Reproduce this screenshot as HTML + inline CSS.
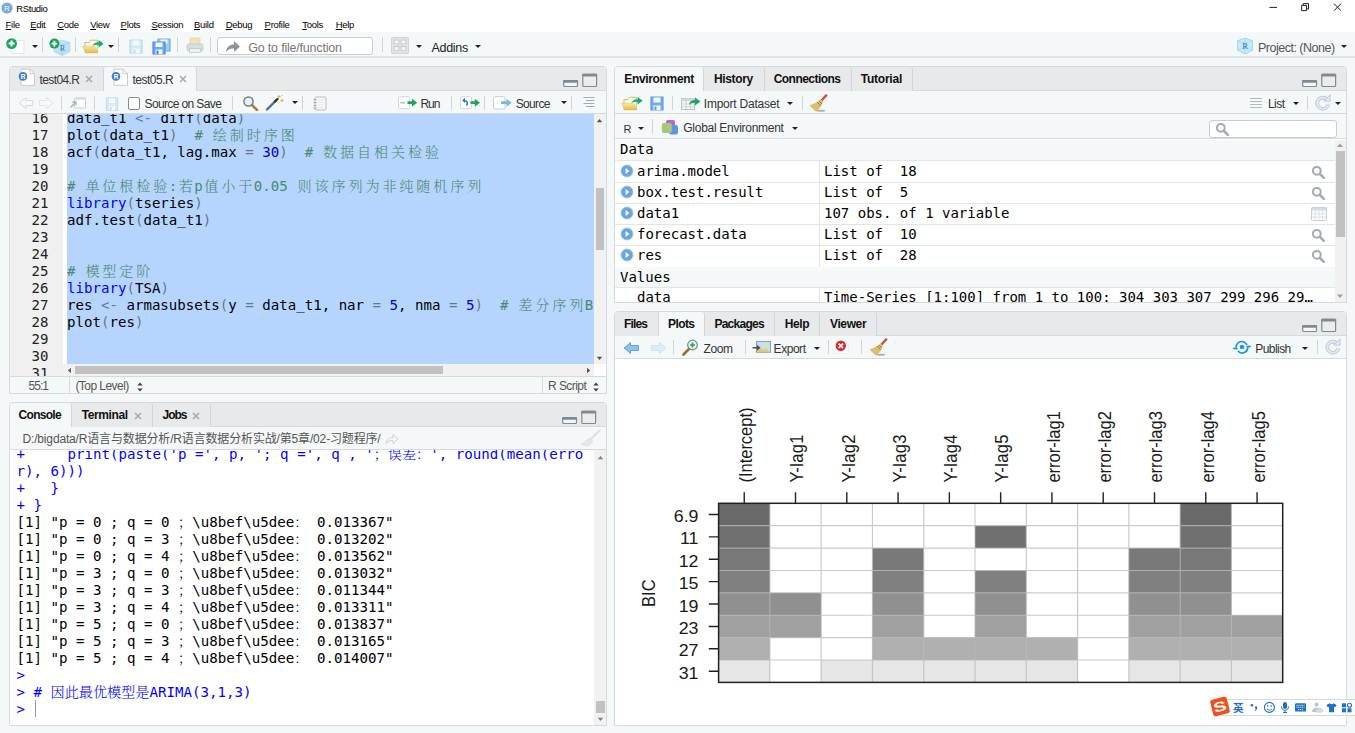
<!DOCTYPE html>
<html lang="zh">
<head>
<meta charset="utf-8">
<title>RStudio</title>
<style>
*{box-sizing:border-box;margin:0;padding:0}
html,body{width:1355px;height:733px;overflow:hidden}
body{position:relative;background:#f4f8f9;font-family:"Liberation Sans","Noto Sans CJK SC",sans-serif;font-size:12px;color:#222}
.abs{position:absolute}
.ui{font-family:"Liberation Sans","Noto Sans CJK SC",sans-serif;white-space:nowrap}
.mono{font-family:"Liberation Mono","Noto Serif CJK SC",monospace;white-space:pre}
#titlebar{left:0;top:0;width:1355px;height:16px;background:#fff}
#menubar{left:0;top:16px;width:1355px;height:16px;background:#fff}
#menubar span{position:absolute;top:0;font-size:9.5px;line-height:17px;letter-spacing:-0.3px;color:#000}
#menubar u{text-decoration:underline;text-underline-offset:1px}
#toolbar{left:0;top:32px;width:1355px;height:26px;background:#f4f8f9;border-bottom:2px solid #e1e4e7}
.pane{position:absolute;border:1px solid #d6dadc;border-radius:4px 4px 0 0;background:#fff;overflow:hidden}
.tabhead{position:absolute;left:0;top:0;right:0;height:24px;background:#e7e9eb;border-bottom:1px solid #d6dadc}
.tab{position:absolute;top:0;height:24px;border-right:1px solid #d2d6d8;font-size:12px;line-height:24px;color:#1a1a1a;background:#e7e9eb;border-radius:3px 3px 0 0}
.tab.sel{background:#f4f8f9;height:25px}
.tab b{font-weight:bold}
.tbar{position:absolute;left:0;right:0;background:#f4f8f9;border-bottom:1px solid #d6dadc}
.sep{position:absolute;width:1px;background:#d0d4d6}
.t12{position:absolute;font-size:12px;line-height:14px;color:#333;white-space:nowrap}
.arr{position:absolute;width:0;height:0;margin-left:.5px;border-left:3px solid transparent;border-right:3px solid transparent;border-top:3.4px solid #222}

.winbtn{position:absolute}
.code{position:absolute;left:0;font-family:"DejaVu Sans Mono","Liberation Mono","Noto Serif CJK SC",monospace;font-size:14.1px;line-height:17px;height:17px;white-space:pre;color:#000}
.code .c{color:#4c886b}.code .o{color:#687687}.code .n{color:#0000cd}.code .k{color:#0000ff}
.code .z{letter-spacing:2.876px;position:relative;left:1.4px}
.ln{position:absolute;left:0;width:38.500px;text-align:right;font-family:"DejaVu Sans Mono",monospace;font-size:14.05px;line-height:17px;height:17px;color:#222}

.cl{position:absolute;left:6.5px;font-family:"DejaVu Sans Mono","Liberation Mono","Noto Serif CJK SC",monospace;font-size:14.13px;line-height:17px;height:17px;white-space:pre;color:#000}
.cl.b{color:#0000ff}
.closex{position:absolute;font-size:13px;line-height:14px;color:#a3a7ab}

.er{position:absolute;left:615px;width:720px;height:21.2px;background:#fff;border-bottom:1px solid #e3e6e8}
.et{position:absolute;font-family:"DejaVu Sans Mono","Liberation Mono",monospace;font-size:14px;line-height:17px;white-space:pre;color:#000}
.u{position:relative;top:-1.5px}
.et{margin-top:-0.7px}.er{margin-top:.5px}
.zc{font-weight:300}.code .z{font-weight:300}
</style>
</head>
<body>
<!-- TITLE BAR -->
<div id="titlebar" class="abs">
<svg class="abs" style="left:1px;top:2px" width="12" height="12" viewBox="0 0 12 12"><circle cx="6" cy="6" r="5.6" fill="#75aadb"/><text x="6" y="8.8" font-family="Liberation Sans,sans-serif" font-size="7.5" fill="#fff" text-anchor="middle">R</text></svg>
<span class="abs ui" style="left:16.3px;top:1.5px;font-size:9.5px;line-height:14px;letter-spacing:-0.4px;color:#000">RStudio</span>
<svg class="abs" style="left:1262px;top:0" width="90" height="16" viewBox="0 0 90 16"><path d="M7.500 7.400h7.500" stroke="#222" stroke-width="1" fill="none"/><path d="M39.600 5.400h5v5.200h-5zM41.200 5.200v-1.600h5.300v5.300h-1.700" stroke="#222" stroke-width="1" fill="none"/><path d="M72 3.600l7 7.100M79 3.600l-7 7.100" stroke="#222" stroke-width="1" fill="none"/></svg>
</div>
<!-- MENU BAR -->
<div id="menubar" class="abs ui"><span style="left:5.6px"><u>F</u>ile</span><span style="left:30.2px"><u>E</u>dit</span><span style="left:57.2px"><u>C</u>ode</span><span style="left:90.2px"><u>V</u>iew</span><span style="left:120.6px"><u>P</u>lots</span><span style="left:151.5px"><u>S</u>ession</span><span style="left:194px"><u>B</u>uild</span><span style="left:225.7px"><u>D</u>ebug</span><span style="left:264.6px"><u>P</u>rofile</span><span style="left:302.3px"><u>T</u>ools</span><span style="left:335.7px"><u>H</u>elp</span></div>
<!-- MAIN TOOLBAR -->
<div id="toolbar" class="abs">
<!-- new file -->
<svg class="abs" style="left:5px;top:5px" width="22" height="18" viewBox="0 0 22 18"><rect x="7" y="3.5" width="12" height="13" fill="#fff" stroke="#e1e6ea" stroke-width="1"/><circle cx="6.6" cy="6.6" r="5.4" fill="#1aa45c"/><path d="M6.6 3.6v6M3.6 6.6h6" stroke="#fff" stroke-width="2"/></svg>
<div class="arr" style="left:31.5px;top:13px"></div>
<div class="sep" style="left:42px;top:5px;height:15px"></div>
<!-- new project -->
<svg class="abs" style="left:48px;top:5px" width="24" height="20" viewBox="0 0 24 20"><path d="M14 3l8 2.5v9l-8 4-8-4v-9z" fill="#bfe1f3" stroke="#9fd0ea" stroke-width=".6"/><path d="M6 5.5l8 3 8-3M14 8.500v10" stroke="#8cc6e6" stroke-width=".6" fill="none"/><text x="14.500" y="14" font-family="Liberation Serif,serif" font-size="8" fill="#2a76b8" text-anchor="middle">R</text><circle cx="6.400" cy="6.600" r="5" fill="#1aa45c"/><path d="M6.400 3.800v5.600M3.600 6.600h5.600" stroke="#fff" stroke-width="1.900"/></svg>
<div class="sep" style="left:75px;top:5px;height:15px"></div>
<!-- open -->
<svg class="abs" style="left:82px;top:6px" width="23" height="16" viewBox="0 0 23 16"><defs><linearGradient id="fg" x1="0" y1="0" x2="0" y2="1"><stop offset="0" stop-color="#f5ea9f"/><stop offset="1" stop-color="#dfbd48"/></linearGradient></defs><path d="M3 14.500v-10h4l1.500-2.300h6.800v12.300z" fill="#fbfbf6" stroke="#d4b85a" stroke-width=".9"/><path d="M.7 8.200h12.100l3 6.700h-11.800z" fill="url(#fg)" stroke="#d9bb55" stroke-width=".5"/><path d="M10.300 7.900c1.500-2.800 4-3.800 6.300-3.600v-2.300l5 3.700-5 3.700v-2.400c-2.300-.3-4.500-.1-6.300.9z" fill="#12ad7a"/></svg>
<div class="arr" style="left:107px;top:13px"></div>
<div class="sep" style="left:118px;top:5px;height:15px"></div>
<!-- save (disabled) -->
<svg class="abs" style="left:129px;top:7px" width="14" height="15" viewBox="0 0 14 15"><path d="M1 1h12v13h-12z" fill="#d9e8f6" stroke="#bcd5ee" stroke-width="1.200"/><rect x="3.500" y="1.500" width="7" height="5" fill="#f3f8fc"/><rect x="3.500" y="9.500" width="7" height="4.500" fill="#f3f8fc"/><rect x="4.500" y="10.500" width="2" height="3.500" fill="#c7dcf0"/></svg>
<!-- save all -->
<svg class="abs" style="left:152px;top:6px" width="19" height="17" viewBox="0 0 19 17"><path d="M6 1h12v12h-12z" fill="#9ccdee" stroke="#6db0e2" stroke-width="1.200"/><rect x="8.500" y="1.500" width="7" height="4" fill="#eef5fc"/><path d="M1 4h12v12h-12z" fill="#6ba6e8" stroke="#4a8fdc" stroke-width="1.200"/><rect x="3.500" y="4.500" width="7" height="4.500" fill="#f3f8fc"/><rect x="3.500" y="11.500" width="7" height="4.500" fill="#f3f8fc"/><rect x="4.500" y="12.500" width="2" height="3.500" fill="#3b82d1"/></svg>
<div class="sep" style="left:177px;top:5px;height:15px"></div>
<!-- print -->
<svg class="abs" style="left:186px;top:5px" width="18" height="17" viewBox="0 0 18 17"><rect x="4" y="1" width="10" height="7" fill="#f3e3b2" stroke="#e0cf9c" stroke-width=".6"/><rect x="1" y="7" width="16" height="7" rx="1.500" fill="#d9dde3" stroke="#bcc2cb" stroke-width=".7"/><rect x="3.500" y="11.500" width="11" height="4" fill="#eceff3" stroke="#b5bbc4" stroke-width=".6"/></svg>
<div class="sep" style="left:210px;top:5px;height:15px"></div>
<!-- goto -->
<div class="abs" style="left:217px;top:5px;width:156px;height:18px;background:#fff;border:1px solid #c9cdd0;border-radius:3px"></div>
<svg class="abs" style="left:225px;top:8px" width="16" height="13" viewBox="0 0 16 13"><path d="M1 12c.5-5 3.500-7.500 8-7.500v-3.500l6 5.500-6 5.500v-3.500c-3.500-.2-6 .8-8 3.500z" fill="#8e9399"/></svg>
<span class="abs ui" style="left:248.3px;top:7.5px;font-size:12.5px;line-height:16px;letter-spacing:-0.2px;color:#777">Go to file/function</span>
<div class="sep" style="left:382px;top:5px;height:15px"></div>
<!-- grid -->
<svg class="abs" style="left:391px;top:5px" width="18" height="17" viewBox="0 0 18 17"><rect x=".5" y=".5" width="17" height="16" rx="1.500" fill="#e3e6e9" stroke="#cfd3d7"/><rect x="3" y="3" width="5" height="4" fill="#f4f6f7" stroke="#bfc4c9" stroke-width=".8"/><rect x="10" y="3" width="5" height="4" fill="#f4f6f7" stroke="#bfc4c9" stroke-width=".8"/><rect x="3" y="9.500" width="5" height="4" fill="#f4f6f7" stroke="#bfc4c9" stroke-width=".8"/><rect x="10" y="9.500" width="5" height="4" fill="#f4f6f7" stroke="#bfc4c9" stroke-width=".8"/></svg>
<div class="arr" style="left:415px;top:13px"></div>
<span class="abs ui" style="left:431.5px;top:7.5px;font-size:12.5px;line-height:16px;letter-spacing:-0.3px;color:#222">Addins</span>
<div class="arr" style="left:474px;top:13px"></div>
<!-- project -->
<svg class="abs" style="left:1236px;top:5px" width="18" height="18" viewBox="0 0 18 18"><path d="M9 1l7.500 2.800v9.400l-7.500 3.800-7.500-3.800v-9.400z" fill="#c9ebf8" stroke="#86cfea" stroke-width=".7"/><path d="M1.500 3.800l7.500 2.800 7.500-2.800M9 6.600v10.400M1.500 13.200l7.500-3 7.500 3M9 1v9" stroke="#8fd3ec" stroke-width=".6" fill="none"/><text x="9" y="12" font-family="Liberation Serif,serif" font-size="8.500" fill="#2a76b8" text-anchor="middle">R</text></svg>
<span class="abs ui" style="left:1258px;top:7.5px;font-size:12.5px;line-height:16px;letter-spacing:-0.5px;color:#555">Project: (None)</span>
<div class="arr" style="left:1340px;top:13px"></div>
</div>
<!-- SOURCE PANE -->
<div id="src" class="pane" style="left:9px;top:66px;width:598px;height:328px">
<div class="tabhead"></div>
<div class="tab" style="left:0;width:94px"></div>
<div class="tab sel" style="left:94px;width:93px"></div>
</div>
<svg class="abs" style="left:17.5px;top:68px" width="18" height="18" viewBox="0 0 18 18"><path d="M3 1.200h9l4.500 4.500v11.600h-13.500z" fill="#fff" stroke="#c2c6ca" stroke-width=".9"/><path d="M12 1.200v4.500h4.500" fill="none" stroke="#c2c6ca" stroke-width=".9"/><circle cx="5" cy="8.400" r="4.300" fill="#3f7fc4"/><text x="5" y="10.800" font-family="Liberation Sans,sans-serif" font-weight="bold" font-size="6.500" fill="#fff" text-anchor="middle">R</text></svg>
<span class="t12" style="left:39.5px;top:72.5px;letter-spacing:-0.6px">test04.R</span>
<svg class="abs" style="left:85px;top:75px" width="8" height="8" viewBox="0 0 8 8"><path d="M1 1l6 6M7 1l-6 6" stroke="#a6aaae" stroke-width="1.500"/></svg>
<svg class="abs" style="left:111.0px;top:68px" width="18" height="18" viewBox="0 0 18 18"><path d="M3 1.200h9l4.500 4.500v11.600h-13.500z" fill="#fff" stroke="#c2c6ca" stroke-width=".9"/><path d="M12 1.200v4.500h4.500" fill="none" stroke="#c2c6ca" stroke-width=".9"/><circle cx="5" cy="8.400" r="4.300" fill="#3f7fc4"/><text x="5" y="10.800" font-family="Liberation Sans,sans-serif" font-weight="bold" font-size="6.500" fill="#fff" text-anchor="middle">R</text></svg>
<span class="t12" style="left:132.5px;top:72.5px;letter-spacing:-0.51px">test05.R</span>
<svg class="abs" style="left:179px;top:75px" width="8" height="8" viewBox="0 0 8 8"><path d="M1 1l6 6M7 1l-6 6" stroke="#a6aaae" stroke-width="1.500"/></svg>
<svg class="abs" style="left:562.5px;top:73.0px" width="36" height="15" viewBox="0 0 36 15"><rect x=".7" y="7.700" width="13.800" height="5.800" rx="1" fill="#f5f6f7" stroke="#7f8b92" stroke-width="1.200"/><rect x=".1" y="7.100" width="15" height="2.600" rx=".8" fill="#7f8b92"/><rect x="19.800" y="1.300" width="13.800" height="12.200" rx="1" fill="#eaeced" stroke="#7f8b92" stroke-width="1.200"/><rect x="19.200" y=".7" width="15" height="2.800" rx=".8" fill="#7f8b92"/></svg>
<!-- source toolbar -->
<div class="tbar" style="left:10px;top:91px;width:596px;right:auto;height:23px"></div>
<svg class="abs" style="left:18px;top:96px" width="38" height="14" viewBox="0 0 38 14"><path d="M1.500 7l6.500-5.500v3h7v5h-7v3z" fill="#f7f9fa" stroke="#d3d8db" stroke-width="1"/><path d="M35 7l-6.500-5.500v3h-7v5h7v3z" fill="#f7f9fa" stroke="#dfe3e5" stroke-width="1"/></svg>
<div class="sep" style="left:61px;top:96px;height:14px"></div>
<svg class="abs" style="left:69px;top:96px" width="18" height="14" viewBox="0 0 18 14"><rect x="5.500" y="1.500" width="11" height="10.500" rx="1" fill="#fff" stroke="#c9ced2"/><rect x="5.500" y="1.500" width="11" height="2.500" fill="#dbe3ec"/><path d="M1.500 11.500l5-5M3.500 6h3.500v3.500" stroke="#aab2b9" stroke-width="1.400" fill="none"/></svg>
<div class="sep" style="left:94px;top:96px;height:14px"></div>
<svg class="abs" style="left:104.500px;top:96.500px" width="14" height="14" viewBox="0 0 14 15"><path d="M1 1h12v13h-12z" fill="#d9e8f6" stroke="#c5daf0" stroke-width="1.200"/><rect x="3.500" y="1.500" width="7" height="5" fill="#f3f8fc"/><rect x="3.500" y="9.500" width="7" height="4.500" fill="#f3f8fc"/><rect x="4.500" y="10.500" width="2" height="3.500" fill="#c7dcf0"/></svg>
<div class="abs" style="left:127.500px;top:97px;width:12.500px;height:12.500px;background:#fff;border:1px solid #8a8a8a;border-radius:2px"></div>
<span class="t12" style="left:144.500px;top:96.500px;letter-spacing:-0.62px">Source on Save</span>
<div class="sep" style="left:232px;top:96px;height:14px"></div>
<svg class="abs" style="left:242px;top:95px" width="17" height="16" viewBox="0 0 17 16"><circle cx="6.500" cy="6.500" r="4.600" fill="#eaf3fb" stroke="#6d7f8f" stroke-width="1.500"/><path d="M10 10l5 5" stroke="#b07a3a" stroke-width="2.600" stroke-linecap="round"/></svg>
<svg class="abs" style="left:265px;top:94px" width="20" height="17" viewBox="0 0 20 17"><path d="M2 15.500l9-9" stroke="#4a6d9c" stroke-width="2.400" stroke-linecap="round"/><path d="M10 7.500l2.500-2.500" stroke="#333" stroke-width="2.400" stroke-linecap="round"/><path d="M14 1v3M12.500 2.500h3M17 5v3M15.500 6.500h3M16.500 1l1 1" stroke="#e8a33a" stroke-width="1"/></svg>
<div class="arr" style="left:291.500px;top:101px"></div>
<div class="sep" style="left:302px;top:96px;height:14px"></div>
<svg class="abs" style="left:313px;top:95.500px" width="14" height="15" viewBox="0 0 14 15"><rect x="2" y="1" width="11" height="13" rx="1" fill="#f6f7f8" stroke="#b9bfc4"/><path d="M4.500 4h6M4.500 6.500h6M4.500 9h6M4.500 11.500h6" stroke="#dfe3e6" stroke-width=".8"/><path d="M.5 3.500h3M.5 6.500h3M.5 9.500h3M.5 12h3" stroke="#9aa2a8" stroke-width=".9"/></svg>
<!-- Run -->
<svg class="abs" style="left:398px;top:95.500px" width="20" height="14" viewBox="0 0 20 14"><rect x=".5" y=".7" width="11" height="12" rx="1" fill="#fff" stroke="#d3d8dc"/><path d="M2.300 6.700h4.500" stroke="#9cc4ec" stroke-width="1.600"/><path d="M9.500 5.300h4.500v-2.600l5.200 4-5.200 4v-2.600h-4.500z" fill="#1ea75c"/></svg>
<span class="t12" style="left:420.500px;top:96.500px;letter-spacing:-1.100px">Run</span>
<div class="sep" style="left:451px;top:96px;height:14px"></div>
<svg class="abs" style="left:460px;top:95.500px" width="21" height="14" viewBox="0 0 21 14"><rect x=".5" y=".7" width="11" height="12" rx="1" fill="#fff" stroke="#d3d8dc"/><path d="M6.500 9.500c1.800-2.500.8-5-2.700-5" stroke="#2f6fd6" stroke-width="1.500" fill="none"/><path d="M5 1.800l-2.800 2.700 2.800 2.500z" fill="#2f6fd6"/><path d="M10.500 5.300h4.300v-2.600l5.200 4-5.200 4v-2.600h-4.300z" fill="#1ea75c"/></svg>
<div class="sep" style="left:484px;top:96px;height:14px"></div>
<svg class="abs" style="left:493px;top:95.500px" width="20" height="14" viewBox="0 0 20 14"><rect x=".5" y=".7" width="11.500" height="12.300" rx="1" fill="#fff" stroke="#c9ced3"/><path d="M8 5.300h5.500v-2.600l5.200 4-5.200 4v-2.600h-5.500z" fill="#7fb5e6"/></svg>
<span class="t12" style="left:515.800px;top:96.500px;letter-spacing:-0.69px">Source</span>
<div class="arr" style="left:560px;top:101px"></div>
<div class="sep" style="left:571px;top:96px;height:14px"></div>
<svg class="abs" style="left:582.500px;top:95.500px" width="12" height="12" viewBox="0 0 12 12"><path d="M.5 1.500h11M3 4.500h8.500M.5 7.500h11M3 10.500h8.500" stroke="#a4abb1" stroke-width="1.100"/></svg>
<div class="abs" style="left:10px;top:114px;width:596px;height:262px;background:#fff;overflow:hidden">
<div class="abs" style="left:0;top:0;width:52.5px;height:263px;background:#f0f0f0"></div>
<div class="abs" style="left:57px;top:0;width:527px;height:250px;background:#b5d5ff"></div>
<div class="ln" style="top:-4.0px">16</div>
<div class="ln" style="top:13.0px">17</div>
<div class="ln" style="top:30.0px">18</div>
<div class="ln" style="top:47.0px">19</div>
<div class="ln" style="top:64.0px">20</div>
<div class="ln" style="top:81.0px">21</div>
<div class="ln" style="top:98.0px">22</div>
<div class="ln" style="top:115.0px">23</div>
<div class="ln" style="top:132.0px">24</div>
<div class="ln" style="top:149.0px">25</div>
<div class="ln" style="top:166.0px">26</div>
<div class="ln" style="top:183.0px">27</div>
<div class="ln" style="top:200.0px">28</div>
<div class="ln" style="top:217.0px">29</div>
<div class="ln" style="top:234.0px">30</div>
<div class="ln" style="top:251.0px">31</div>
<div class="abs" style="left:57px;top:0;width:527px;height:250px;overflow:hidden">
<div class="code" style="top:-4.0px">data<span class="u">_</span>t1 <span class="o">&lt;-</span> diff<span class="o">(</span>data<span class="o">)</span></div>
<div class="code" style="top:13.0px">plot<span class="o">(</span>data<span class="u">_</span>t1<span class="o">)</span>  <span class="c"># <span class="z">绘制时序图</span></span></div>
<div class="code" style="top:30.0px">acf<span class="o">(</span>data<span class="u">_</span>t1, lag.max <span class="o">=</span> <span class="n">30</span><span class="o">)</span>  <span class="c"># <span class="z">数据自相关检验</span></span></div>
<div class="code" style="top:64.0px"><span class="c"># <span class="z">单位根检验</span>:<span class="z">若</span>p<span class="z">值小于</span>0.05 <span class="z">则该序列为非纯随机序列</span></span></div>
<div class="code" style="top:81.0px"><span class="k">library</span><span class="o">(</span>tseries<span class="o">)</span></div>
<div class="code" style="top:98.0px">adf.test<span class="o">(</span>data<span class="u">_</span>t1<span class="o">)</span></div>
<div class="code" style="top:149.0px"><span class="c"># <span class="z">模型定阶</span></span></div>
<div class="code" style="top:166.0px"><span class="k">library</span><span class="o">(</span>TSA<span class="o">)</span></div>
<div class="code" style="top:183.0px">res <span class="o">&lt;-</span> armasubsets<span class="o">(</span>y <span class="o">=</span> data<span class="u">_</span>t1, nar <span class="o">=</span> <span class="n">5</span>, nma <span class="o">=</span> <span class="n">5</span><span class="o">)</span>  <span class="c"># <span class="z">差分序列</span>BIC</span></div>
<div class="code" style="top:200.0px">plot<span class="o">(</span>res<span class="o">)</span></div>
</div>
<div class="abs" style="left:584px;top:0;width:12px;height:250px;background:#f1f1f1"></div>
<div class="abs" style="left:585.5px;top:74px;width:8.5px;height:62px;background:#c1c1c1"></div>
<svg class="abs" style="left:586px;top:4px" width="8" height="5" viewBox="0 0 8 5"><path d="M.8 4.200l2.700-3.200 2.700 3.200z" fill="#505050"/></svg>
<svg class="abs" style="left:586px;top:242px" width="8" height="5" viewBox="0 0 8 5"><path d="M.8 .8l2.700 3.200 2.700-3.200z" fill="#505050"/></svg>
<div class="abs" style="left:52.5px;top:250px;width:531.5px;height:13px;background:#f1f1f1"></div>
<div class="abs" style="left:65px;top:251.700px;width:368px;height:8.800px;background:#c1c1c1"></div>
<svg class="abs" style="left:57px;top:252.800px" width="5" height="8" viewBox="0 0 5 8"><path d="M4 .8l-3.200 2.700 3.200 2.700z" fill="#606060"/></svg>
<svg class="abs" style="left:576px;top:252.800px" width="5" height="8" viewBox="0 0 5 8"><path d="M1 .8l3.200 2.700-3.200 2.700z" fill="#505050"/></svg>
<div class="abs" style="left:584px;top:250px;width:12px;height:13px;background:#fdfdfd"></div>
</div>
<div class="abs" style="left:10px;top:376px;width:596px;height:17px;background:#f4f8f9;border-top:1px solid #d6dadc"></div>
<span class="t12" style="left:28.600px;top:379px;letter-spacing:-1px;color:#555">55:1</span>
<div class="sep" style="left:69px;top:377px;height:16px;background:#d6dadc"></div>
<span class="t12" style="left:75.400px;top:379px;letter-spacing:-0.55px;color:#555">(Top Level)</span>
<svg class="abs" style="left:136.500px;top:381.500px" width="6" height="10" viewBox="0 0 6 10"><path d="M.3 3.500l2.700-3 2.700 3zM.3 6.500l2.700 3 2.700-3z" fill="#444"/></svg>
<div class="sep" style="left:542px;top:377px;height:16px;background:#d6dadc"></div>
<span class="t12" style="left:548px;top:379px;letter-spacing:-0.55px;color:#555">R Script</span>
<svg class="abs" style="left:593px;top:381.500px" width="6" height="10" viewBox="0 0 6 10"><path d="M.3 3.500l2.700-3 2.700 3zM.3 6.500l2.700 3 2.700-3z" fill="#444"/></svg>
<!-- CONSOLE PANE -->
<div id="con" class="pane" style="left:9px;top:402px;width:598px;height:324px">
<div class="tabhead" style="height:24px"></div>
<div class="tab sel" style="left:0;width:62px;height:25px"></div>
<div class="tab" style="left:62px;width:81px;height:24px"></div>
<div class="tab" style="left:143px;width:57.500px;height:24px"></div>
</div>
<span class="t12" style="left:18.600px;top:408px;font-weight:bold;letter-spacing:-0.72px;color:#111">Console</span>
<span class="t12" style="left:81.700px;top:408px;font-weight:bold;letter-spacing:-0.39px;color:#111">Terminal</span>
<svg class="abs" style="left:134.3px;top:411.5px" width="8" height="8" viewBox="0 0 8 8"><path d="M1 1l6 6M7 1l-6 6" stroke="#a6aaae" stroke-width="1.500"/></svg>
<span class="t12" style="left:162.600px;top:408px;font-weight:bold;letter-spacing:-1.1px;color:#111">Jobs</span>
<svg class="abs" style="left:192px;top:411.5px" width="8" height="8" viewBox="0 0 8 8"><path d="M1 1l6 6M7 1l-6 6" stroke="#a6aaae" stroke-width="1.500"/></svg>
<svg class="abs" style="left:562.0px;top:409.5px" width="36" height="15" viewBox="0 0 36 15"><rect x=".7" y="7.700" width="13.800" height="5.800" rx="1" fill="#f5f6f7" stroke="#7f8b92" stroke-width="1.200"/><rect x=".1" y="7.100" width="15" height="2.600" rx=".8" fill="#7f8b92"/><rect x="19.800" y="1.300" width="13.800" height="12.200" rx="1" fill="#eaeced" stroke="#7f8b92" stroke-width="1.200"/><rect x="19.200" y=".7" width="15" height="2.800" rx=".8" fill="#7f8b92"/></svg>
<div class="tbar" style="left:10px;top:426.500px;width:596px;right:auto;height:23px"></div>
<span class="t12" style="left:22.500px;top:432.400px;letter-spacing:-0.16px;color:#555">D:/bigdata/R语言与数据分析/R语言数据分析实战/第5章/02-习题程序/</span>
<svg class="abs" style="left:385px;top:432.500px" width="14" height="12" viewBox="0 0 14 12"><path d="M1 11c.5-4.500 3-6.500 7-6.500v-3l5 4.500-5 4.500v-3c-3-.2-5 .8-7 3.500z" fill="#f4f6f7" stroke="#cdd2d6" stroke-width="1"/></svg>
<svg class="abs" style="left:580px;top:429px" width="21" height="18" viewBox="0 0 21 18"><path d="M19.500 1.500l-9 9" stroke="#dcdfe2" stroke-width="1.800" stroke-linecap="round"/><path d="M9.500 9l3.500 3.500-5 4.500-7-1.500z" fill="#e4e7ea" stroke="#d5d9dc" stroke-width=".6"/></svg>
<div class="abs" style="left:10px;top:449.500px;width:596px;height:275.500px;background:#fff;overflow:hidden">
<div class="cl b" style="top:-3.7px">+     print(paste('p =', p, '; q =', q , '<span class="zc">；误差：</span>', round(mean(erro</div>
<div class="cl b" style="top:13.3px">r), 6)))</div>
<div class="cl b" style="top:30.3px">+   }</div>
<div class="cl b" style="top:47.3px">+ }</div>
<div class="cl " style="top:64.3px">[1] "p = 0 ; q = 0 <span class="zc">；</span>\u8bef\u5dee<span class="zc">：</span> 0.013367"</div>
<div class="cl " style="top:81.3px">[1] "p = 0 ; q = 3 <span class="zc">；</span>\u8bef\u5dee<span class="zc">：</span> 0.013202"</div>
<div class="cl " style="top:98.3px">[1] "p = 0 ; q = 4 <span class="zc">；</span>\u8bef\u5dee<span class="zc">：</span> 0.013562"</div>
<div class="cl " style="top:115.3px">[1] "p = 3 ; q = 0 <span class="zc">；</span>\u8bef\u5dee<span class="zc">：</span> 0.013032"</div>
<div class="cl " style="top:132.3px">[1] "p = 3 ; q = 3 <span class="zc">；</span>\u8bef\u5dee<span class="zc">：</span> 0.011344"</div>
<div class="cl " style="top:149.3px">[1] "p = 3 ; q = 4 <span class="zc">；</span>\u8bef\u5dee<span class="zc">：</span> 0.013311"</div>
<div class="cl " style="top:166.3px">[1] "p = 5 ; q = 0 <span class="zc">；</span>\u8bef\u5dee<span class="zc">：</span> 0.013837"</div>
<div class="cl " style="top:183.3px">[1] "p = 5 ; q = 3 <span class="zc">；</span>\u8bef\u5dee<span class="zc">：</span> 0.013165"</div>
<div class="cl " style="top:200.3px">[1] "p = 5 ; q = 4 <span class="zc">；</span>\u8bef\u5dee<span class="zc">：</span> 0.014007"</div>
<div class="cl b" style="top:217.3px">&gt; </div>
<div class="cl b" style="top:234.3px">&gt; # <span class="zc">因此最优模型是</span>ARIMA(3,1,3)</div>
<div class="cl b" style="top:251.3px">&gt; </div>
<div class="abs" style="left:24.500px;top:250.500px;width:1px;height:16.500px;background:#9a9a9a"></div>
<div class="abs" style="left:584.300px;top:0;width:11.700px;height:275.500px;background:#f1f1f1"></div>
<div class="abs" style="left:585.800px;top:251.800px;width:8.900px;height:11.600px;background:#c1c1c1"></div>
<svg class="abs" style="left:586.500px;top:5px" width="8" height="5" viewBox="0 0 8 5"><path d="M.8 4.200l2.700-3.200 2.700 3.200z" fill="#808080"/></svg>
<svg class="abs" style="left:586.500px;top:267px" width="8" height="5" viewBox="0 0 8 5"><path d="M.8 .8l2.700 3.200 2.700-3.200z" fill="#808080"/></svg>
</div>
<!-- ENV PANE -->
<div id="env" class="pane" style="left:614px;top:66px;width:733px;height:237px">
<div class="tabhead"></div>
<div class="tab sel" style="left:0;width:88.500px"></div>
<div class="tab" style="left:88.500px;width:61.500px"></div>
<div class="tab" style="left:150px;width:86.500px"></div>
<div class="tab" style="left:236.500px;width:61px"></div>
</div>
<span class="t12" style="left:624.300px;top:72px;font-weight:bold;letter-spacing:-0.34px;color:#111">Environment</span>
<span class="t12" style="left:714px;top:72px;font-weight:bold;letter-spacing:-0.36px;color:#111">History</span>
<span class="t12" style="left:773.700px;top:72px;font-weight:bold;letter-spacing:-0.54px;color:#111">Connections</span>
<span class="t12" style="left:860.700px;top:72px;font-weight:bold;letter-spacing:-0.22px;color:#111">Tutorial</span>
<svg class="abs" style="left:1302.0px;top:73.0px" width="36" height="15" viewBox="0 0 36 15"><rect x=".7" y="7.700" width="13.800" height="5.800" rx="1" fill="#f5f6f7" stroke="#7f8b92" stroke-width="1.200"/><rect x=".1" y="7.100" width="15" height="2.600" rx=".8" fill="#7f8b92"/><rect x="19.800" y="1.300" width="13.800" height="12.200" rx="1" fill="#eaeced" stroke="#7f8b92" stroke-width="1.200"/><rect x="19.200" y=".7" width="15" height="2.800" rx=".8" fill="#7f8b92"/></svg>
<div class="tbar" style="left:615px;top:91px;width:731px;right:auto;height:23px"></div>
<svg class="abs" style="left:621px;top:95px" width="23" height="16" viewBox="0 0 23 16"><path d="M3 14.500v-10h4l1.500-2.300h6.800v12.300z" fill="#fbfbf6" stroke="#d4b85a" stroke-width=".9"/><path d="M.7 8.200h12.100l3 6.700h-11.800z" fill="url(#fg)" stroke="#d9bb55" stroke-width=".5"/><path d="M10.300 7.900c1.500-2.800 4-3.800 6.300-3.600v-2.300l5 3.700-5 3.700v-2.400c-2.300-.3-4.500-.1-6.300.9z" fill="#12ad7a"/></svg>
<svg class="abs" style="left:650px;top:96px" width="14" height="15" viewBox="0 0 14 15"><path d="M1 1h12v13h-12z" fill="#74ade9" stroke="#5f9ce0" stroke-width="1.200"/><rect x="3.500" y="1.500" width="7" height="5" fill="#f3f8fc"/><rect x="3.500" y="9.500" width="7" height="4.500" fill="#f3f8fc"/><rect x="4.500" y="10.500" width="2" height="3.500" fill="#5f9ce0"/></svg>
<div class="sep" style="left:672px;top:96px;height:14px"></div>
<svg class="abs" style="left:680.500px;top:95px" width="21" height="16" viewBox="0 0 21 16"><rect x=".5" y="3.500" width="13" height="11" fill="#f7f8f9" stroke="#b9c0c6"/><rect x=".5" y="3.500" width="13" height="2.800" fill="#d5dae0"/><path d="M.5 9h13M.5 11.800h13M5 3.500v11M9.500 3.500v11" stroke="#c3c9ce" stroke-width=".8"/><path d="M8 10c.5-3.500 3-5 6-5v-2.400l5.500 3.900-5.500 3.900v-2.400c-2.500-.2-4.500.3-6 2z" fill="#23a566"/></svg>
<span class="t12" style="left:703.800px;top:96.500px;letter-spacing:-0.23px">Import Dataset</span>
<div class="arr" style="left:786.500px;top:101.500px"></div>
<div class="sep" style="left:802px;top:96px;height:14px"></div>
<svg class="abs" style="left:809.0px;top:93.5px" width="19" height="19" viewBox="0 0 19 19"><ellipse cx="12" cy="16.700" rx="4.200" ry="1" fill="#8f99a4" opacity=".75"/><path d="M17.200 1.400l-4.500 4.900" stroke="#cf4b3f" stroke-width="2.300" stroke-linecap="round"/><path d="M11.800 5.700c1 .6 1.600 1.600 1.600 2.800-1.300 3.600-3.300 6.500-6.400 9l-6-6c4.300-1.300 8-3.300 10.800-5.800z" fill="#dcc070" stroke="#cdb05c" stroke-width=".5"/><path d="M9.800 6.800l3.100 3.300M8.200 8l3.300 3.500" stroke="#a9782c" stroke-width="1"/></svg>
<svg class="abs" style="left:1250px;top:96.500px" width="13" height="12" viewBox="0 0 13 12"><path d="M0 1.500h12M0 4.500h12M0 7.500h12M0 10.500h12" stroke="#b3b9be" stroke-width="1"/></svg>
<span class="t12" style="left:1268px;top:96.500px;letter-spacing:-0.56px">List</span>
<div class="arr" style="left:1292px;top:101.500px"></div>
<div class="sep" style="left:1307px;top:96px;height:14px"></div>
<svg class="abs" style="left:1314px;top:94px" width="17" height="17" viewBox="0 0 17 17"><path d="M12.800 5.200a5.600 5.600 0 1 0 1.600 4.800" fill="none" stroke="#bcc3d4" stroke-width="3.600"/><path d="M12.800 5.200a5.600 5.600 0 1 0 1.600 4.800" fill="none" stroke="#e3e8f5" stroke-width="2"/><path d="M9.800 7.200h6.400v-6.400z" fill="#e3e8f5" stroke="#bcc3d4" stroke-width=".8"/></svg>
<div class="arr" style="left:1334.500px;top:101.500px"></div>
<div class="tbar" style="left:615px;top:114px;width:731px;right:auto;height:25px"></div>
<span class="t12" style="left:623.600px;top:122px;font-size:11px;color:#333">R</span>
<div class="arr" style="left:637.500px;top:126.500px"></div>
<div class="sep" style="left:652px;top:119px;height:15px"></div>
<svg class="abs" style="left:660.500px;top:118.500px" width="18" height="17" viewBox="0 0 18 17"><rect x="5" y="1" width="9" height="9" rx="2" fill="#b667c9"/><rect x="8" y="6" width="9" height="9.500" rx="2" fill="#5d95e0"/><rect x=".8" y="4" width="10" height="10" rx="2" fill="#a8c878"/></svg>
<span class="t12" style="left:683.300px;top:121px;letter-spacing:-0.28px">Global Environment</span>
<div class="arr" style="left:791px;top:126.500px"></div>
<div class="abs" style="left:1208.500px;top:119.500px;width:128px;height:18.500px;background:#fff;border:1px solid #c9cdd0;border-radius:3px"></div>
<svg class="abs" style="left:1215px;top:122px" width="15" height="15" viewBox="0 0 15 15"><circle cx="5.800" cy="5.800" r="3.900" fill="#fff" stroke="#a3acb1" stroke-width="2"/><path d="M9 9l3.800 3.800" stroke="#a3acb1" stroke-width="2.600" stroke-linecap="round"/></svg>
<!-- env list -->
<div class="abs" style="left:615px;top:139px;width:731px;height:163px;background:#fff;overflow:hidden"></div>
<div class="abs" style="left:615px;top:139.500px;width:720px;height:21.800px;background:#f4f8f9;border-bottom:1px solid #e3e6e8"></div>
<span class="et" style="left:620px;top:142px">Data</span>
<div class="er" style="top:161.3px"></div>
<svg class="abs" style="left:620px;top:163.7px" width="14" height="14" viewBox="0 0 14 14"><circle cx="7" cy="7" r="6" fill="#6aa5dc" stroke="#9cc7ec" stroke-width=".9"/><path d="M5.600 3.900l3.800 3.100-3.800 3.100z" fill="#fff"/></svg>
<span class="et" style="left:637px;top:163.5px">arima.model</span>
<span class="et" style="left:824px;top:163.5px">List of  18</span>
<svg class="abs" style="left:1310.5px;top:164.7px" width="15" height="15" viewBox="0 0 15 15"><circle cx="5.800" cy="5.800" r="3.900" fill="#fff" stroke="#a3acb1" stroke-width="2"/><path d="M9 9l3.800 3.800" stroke="#a3acb1" stroke-width="2.600" stroke-linecap="round"/></svg>
<div class="er" style="top:182.4px"></div>
<svg class="abs" style="left:620px;top:184.8px" width="14" height="14" viewBox="0 0 14 14"><circle cx="7" cy="7" r="6" fill="#6aa5dc" stroke="#9cc7ec" stroke-width=".9"/><path d="M5.600 3.900l3.800 3.100-3.800 3.100z" fill="#fff"/></svg>
<span class="et" style="left:637px;top:184.6px">box.test.result</span>
<span class="et" style="left:824px;top:184.6px">List of  5</span>
<svg class="abs" style="left:1310.5px;top:185.8px" width="15" height="15" viewBox="0 0 15 15"><circle cx="5.800" cy="5.800" r="3.900" fill="#fff" stroke="#a3acb1" stroke-width="2"/><path d="M9 9l3.800 3.800" stroke="#a3acb1" stroke-width="2.600" stroke-linecap="round"/></svg>
<div class="er" style="top:203.6px"></div>
<svg class="abs" style="left:620px;top:206.0px" width="14" height="14" viewBox="0 0 14 14"><circle cx="7" cy="7" r="6" fill="#6aa5dc" stroke="#9cc7ec" stroke-width=".9"/><path d="M5.600 3.900l3.800 3.100-3.800 3.100z" fill="#fff"/></svg>
<span class="et" style="left:637px;top:205.8px">data1</span>
<span class="et" style="left:824px;top:205.8px">107 obs. of 1 variable</span>
<svg class="abs" style="left:1311px;top:207.1px" width="16" height="14" viewBox="0 0 16 14"><rect x=".5" y=".5" width="15" height="13" rx="1" fill="#fbfcfd" stroke="#c5cdd6"/><rect x=".5" y=".5" width="15" height="3" fill="#cfdcea"/><path d="M.5 6.800h15M.5 10h15M4.300 3.500v10M8 3.500v10M11.700 3.500v10" stroke="#d5dde6" stroke-width=".8"/></svg>
<div class="er" style="top:224.7px"></div>
<svg class="abs" style="left:620px;top:227.1px" width="14" height="14" viewBox="0 0 14 14"><circle cx="7" cy="7" r="6" fill="#6aa5dc" stroke="#9cc7ec" stroke-width=".9"/><path d="M5.600 3.900l3.800 3.100-3.800 3.100z" fill="#fff"/></svg>
<span class="et" style="left:637px;top:226.9px">forecast.data</span>
<span class="et" style="left:824px;top:226.9px">List of  10</span>
<svg class="abs" style="left:1310.5px;top:228.1px" width="15" height="15" viewBox="0 0 15 15"><circle cx="5.800" cy="5.800" r="3.900" fill="#fff" stroke="#a3acb1" stroke-width="2"/><path d="M9 9l3.800 3.800" stroke="#a3acb1" stroke-width="2.600" stroke-linecap="round"/></svg>
<div class="er" style="top:245.9px"></div>
<svg class="abs" style="left:620px;top:248.3px" width="14" height="14" viewBox="0 0 14 14"><circle cx="7" cy="7" r="6" fill="#6aa5dc" stroke="#9cc7ec" stroke-width=".9"/><path d="M5.600 3.900l3.800 3.100-3.800 3.100z" fill="#fff"/></svg>
<span class="et" style="left:637px;top:248.1px">res</span>
<span class="et" style="left:824px;top:248.1px">List of  28</span>
<svg class="abs" style="left:1310.5px;top:249.3px" width="15" height="15" viewBox="0 0 15 15"><circle cx="5.800" cy="5.800" r="3.900" fill="#fff" stroke="#a3acb1" stroke-width="2"/><path d="M9 9l3.800 3.800" stroke="#a3acb1" stroke-width="2.600" stroke-linecap="round"/></svg>
<div class="abs" style="left:818.500px;top:161.300px;width:1px;height:105.7px;background:#e3e6e8"></div>
<div class="abs" style="left:615px;top:267.0px;width:720px;height:21.200px;background:#f4f8f9;border-bottom:1px solid #e3e6e8"></div>
<span class="et" style="left:620px;top:269.2px">Values</span>
<div class="abs" style="left:615px;top:288.2px;width:720px;height:13.8px;overflow:hidden;background:#fff"><span class="et" style="left:22px;top:1.200px">data</span><span class="et" style="left:209px;top:1.200px">Time-Series [1:100] from 1 to 100: 304 303 307 299 296 29…</span><div class="abs" style="left:203.500px;top:0;width:1px;height:20px;background:#e3e6e8"></div></div>
<div class="abs" style="left:1334.500px;top:139.500px;width:11.500px;height:162.500px;background:#f1f1f1"></div>
<div class="abs" style="left:1336px;top:151.400px;width:8.800px;height:86px;background:#c1c1c1"></div>
<svg class="abs" style="left:1337px;top:143px" width="7" height="4.500" viewBox="0 0 8 5"><path d="M0 4.500l3.500-4 3.500 4z" fill="#a0a0a0"/></svg>
<svg class="abs" style="left:1337px;top:293.500px" width="7" height="4.500" viewBox="0 0 8 5"><path d="M0 .5l3.500 4 3.500-4z" fill="#a0a0a0"/></svg>
<!-- PLOTS PANE -->
<div id="plt" class="pane" style="left:614px;top:311px;width:733px;height:415px">
<div class="tabhead" style="height:24px"></div>
<div class="tab" style="left:0;width:43.500px;height:24px"></div>
<div class="tab sel" style="left:43.500px;width:46.500px;height:25px"></div>
<div class="tab" style="left:90px;width:69.500px;height:24px"></div>
<div class="tab" style="left:159.500px;width:45.500px;height:24px"></div>
<div class="tab" style="left:205px;width:57px;height:24px"></div>
</div>
<span class="t12" style="left:624px;top:317px;font-weight:bold;letter-spacing:-0.84px;color:#111">Files</span>
<span class="t12" style="left:668px;top:317px;font-weight:bold;letter-spacing:-0.59px;color:#111">Plots</span>
<span class="t12" style="left:714.400px;top:317px;font-weight:bold;letter-spacing:-0.74px;color:#111">Packages</span>
<span class="t12" style="left:784.700px;top:317px;font-weight:bold;letter-spacing:-0.37px;color:#111">Help</span>
<span class="t12" style="left:830px;top:317px;font-weight:bold;letter-spacing:-0.38px;color:#111">Viewer</span>
<svg class="abs" style="left:1302.0px;top:317.7px" width="36" height="15" viewBox="0 0 36 15"><rect x=".7" y="7.700" width="13.800" height="5.800" rx="1" fill="#f5f6f7" stroke="#7f8b92" stroke-width="1.200"/><rect x=".1" y="7.100" width="15" height="2.600" rx=".8" fill="#7f8b92"/><rect x="19.800" y="1.300" width="13.800" height="12.200" rx="1" fill="#eaeced" stroke="#7f8b92" stroke-width="1.200"/><rect x="19.200" y=".7" width="15" height="2.800" rx=".8" fill="#7f8b92"/></svg>
<div class="tbar" style="left:615px;top:335.500px;width:731px;right:auto;height:23.500px"></div>
<svg class="abs" style="left:623px;top:341px" width="44" height="14" viewBox="0 0 44 14"><path d="M1 7l6.500-5.500v3h8v5h-8v3z" fill="#8fc1e8" stroke="#5a9fd6" stroke-width=".9"/><path d="M43 7l-6.500-5.500v3h-8v5h8v3z" fill="#dcebf7" stroke="#cfe2f3" stroke-width=".9"/></svg>
<div class="sep" style="left:673px;top:340px;height:14px"></div>
<svg class="abs" style="left:681.500px;top:339px" width="17" height="17" viewBox="0 0 17 17"><path d="M7.500 9.500l-6 6" stroke="#9a6b33" stroke-width="2.600" stroke-linecap="round"/><circle cx="10.500" cy="6" r="4.800" fill="#eaf6ef" stroke="#7d8a94" stroke-width="1.300"/><path d="M10.500 3.500v5M8 6h5" stroke="#22a565" stroke-width="1.700"/></svg>
<span class="t12" style="left:703.600px;top:341.500px;letter-spacing:-0.43px">Zoom</span>
<div class="sep" style="left:745px;top:340px;height:14px"></div>
<svg class="abs" style="left:752px;top:340px" width="20" height="15" viewBox="0 0 20 15"><rect x="4.500" y="1.500" width="14" height="11" fill="#bfe0f5" stroke="#8a96a0" stroke-width=".9"/><path d="M4.500 12.500l4-5 3 3 2-2 5 4z" fill="#e9c46a"/><circle cx="14.500" cy="4.800" r="1.500" fill="#f6e27a"/><path d="M.5 7h4.500v-2.200l3.500 3-3.500 3v-2.200h-4.500z" fill="#4a4f55"/></svg>
<span class="t12" style="left:773.600px;top:341.500px;letter-spacing:-0.46px">Export</span>
<div class="arr" style="left:813px;top:346.500px"></div>
<div class="sep" style="left:828px;top:340px;height:14px"></div>
<svg class="abs" style="left:835px;top:339.500px" width="14" height="14" viewBox="0 0 14 14"><rect x="4" y="3" width="9.500" height="10.500" fill="#fff" stroke="#e3e6e8" stroke-width=".6"/><circle cx="5.800" cy="5.800" r="5.200" fill="#d22f2f"/><path d="M3.600 3.600l4.400 4.400M8 3.600l-4.400 4.400" stroke="#fff" stroke-width="1.700"/></svg>
<div class="sep" style="left:861px;top:340px;height:14px"></div>
<svg class="abs" style="left:868.5px;top:337.5px" width="19" height="19" viewBox="0 0 19 19"><ellipse cx="12" cy="16.700" rx="4.200" ry="1" fill="#8f99a4" opacity=".75"/><path d="M17.200 1.400l-4.500 4.900" stroke="#cf4b3f" stroke-width="2.300" stroke-linecap="round"/><path d="M11.800 5.700c1 .6 1.600 1.600 1.600 2.800-1.300 3.600-3.300 6.500-6.400 9l-6-6c4.300-1.300 8-3.300 10.800-5.800z" fill="#dcc070" stroke="#cdb05c" stroke-width=".5"/><path d="M9.800 6.800l3.100 3.300M8.200 8l3.300 3.500" stroke="#a9782c" stroke-width="1"/></svg>
<svg class="abs" style="left:1233px;top:340px" width="18" height="14" viewBox="0 0 18 14"><path d="M3.500 9.500a5.500 5.500 0 0 1 10.500-4.500" fill="none" stroke="#1e96e3" stroke-width="1.700"/><path d="M14.500 6a5.500 5.500 0 0 1-9.500 5" fill="none" stroke="#1e96e3" stroke-width="1.700"/><circle cx="9" cy="7" r="2.300" fill="#1e96e3"/><path d="M0 8.500h4.500M13.500 6.500h4.500" stroke="#1e96e3" stroke-width="1.700"/></svg>
<span class="t12" style="left:1255.300px;top:341.500px;letter-spacing:-0.56px">Publish</span>
<div class="arr" style="left:1301.500px;top:346.500px"></div>
<div class="sep" style="left:1316.500px;top:340px;height:14px"></div>
<svg class="abs" style="left:1323.500px;top:338px" width="17" height="17" viewBox="0 0 17 17"><path d="M12.800 5.200a5.600 5.600 0 1 0 1.600 4.800" fill="none" stroke="#bcc3d4" stroke-width="3.600"/><path d="M12.800 5.200a5.600 5.600 0 1 0 1.600 4.800" fill="none" stroke="#e3e8f5" stroke-width="2"/><path d="M9.800 7.200h6.400v-6.400z" fill="#e3e8f5" stroke="#bcc3d4" stroke-width=".8"/></svg>
<svg class="abs" style="left:615px;top:359px" width="731" height="366" viewBox="615 359 731 366" font-family="Liberation Sans,sans-serif" font-size="16.5" fill="#1a1a1a">
<rect x="615" y="359" width="731" height="366" fill="#fff"/>
<rect x="718.60" y="503.30" width="51.28" height="22.39" fill="#696969"/>
<rect x="1180.14" y="503.30" width="51.28" height="22.39" fill="#696969"/>
<rect x="718.60" y="525.69" width="51.28" height="22.39" fill="#707070"/>
<rect x="975.01" y="525.69" width="51.28" height="22.39" fill="#707070"/>
<rect x="1180.14" y="525.69" width="51.28" height="22.39" fill="#707070"/>
<rect x="718.60" y="548.08" width="51.28" height="22.39" fill="#787878"/>
<rect x="872.45" y="548.08" width="51.28" height="22.39" fill="#787878"/>
<rect x="1128.85" y="548.08" width="51.28" height="22.39" fill="#787878"/>
<rect x="1180.14" y="548.08" width="51.28" height="22.39" fill="#787878"/>
<rect x="718.60" y="570.46" width="51.28" height="22.39" fill="#808080"/>
<rect x="872.45" y="570.46" width="51.28" height="22.39" fill="#808080"/>
<rect x="975.01" y="570.46" width="51.28" height="22.39" fill="#808080"/>
<rect x="1128.85" y="570.46" width="51.28" height="22.39" fill="#808080"/>
<rect x="1180.14" y="570.46" width="51.28" height="22.39" fill="#808080"/>
<rect x="718.60" y="592.85" width="51.28" height="22.39" fill="#909090"/>
<rect x="769.88" y="592.85" width="51.28" height="22.39" fill="#909090"/>
<rect x="872.45" y="592.85" width="51.28" height="22.39" fill="#909090"/>
<rect x="975.01" y="592.85" width="51.28" height="22.39" fill="#909090"/>
<rect x="1128.85" y="592.85" width="51.28" height="22.39" fill="#909090"/>
<rect x="1180.14" y="592.85" width="51.28" height="22.39" fill="#909090"/>
<rect x="718.60" y="615.24" width="51.28" height="22.39" fill="#a0a0a0"/>
<rect x="769.88" y="615.24" width="51.28" height="22.39" fill="#a0a0a0"/>
<rect x="872.45" y="615.24" width="51.28" height="22.39" fill="#a0a0a0"/>
<rect x="975.01" y="615.24" width="51.28" height="22.39" fill="#a0a0a0"/>
<rect x="1128.85" y="615.24" width="51.28" height="22.39" fill="#a0a0a0"/>
<rect x="1180.14" y="615.24" width="51.28" height="22.39" fill="#a0a0a0"/>
<rect x="1231.42" y="615.24" width="51.28" height="22.39" fill="#a0a0a0"/>
<rect x="718.60" y="637.62" width="51.28" height="22.39" fill="#b0b0b0"/>
<rect x="872.45" y="637.62" width="51.28" height="22.39" fill="#b0b0b0"/>
<rect x="923.73" y="637.62" width="51.28" height="22.39" fill="#b0b0b0"/>
<rect x="975.01" y="637.62" width="51.28" height="22.39" fill="#b0b0b0"/>
<rect x="1026.29" y="637.62" width="51.28" height="22.39" fill="#b0b0b0"/>
<rect x="1128.85" y="637.62" width="51.28" height="22.39" fill="#b0b0b0"/>
<rect x="1180.14" y="637.62" width="51.28" height="22.39" fill="#b0b0b0"/>
<rect x="1231.42" y="637.62" width="51.28" height="22.39" fill="#b0b0b0"/>
<rect x="718.60" y="660.01" width="51.28" height="22.39" fill="#e6e6e6"/>
<rect x="821.16" y="660.01" width="51.28" height="22.39" fill="#e6e6e6"/>
<rect x="872.45" y="660.01" width="51.28" height="22.39" fill="#e6e6e6"/>
<rect x="923.73" y="660.01" width="51.28" height="22.39" fill="#e6e6e6"/>
<rect x="975.01" y="660.01" width="51.28" height="22.39" fill="#e6e6e6"/>
<rect x="1026.29" y="660.01" width="51.28" height="22.39" fill="#e6e6e6"/>
<rect x="1128.85" y="660.01" width="51.28" height="22.39" fill="#e6e6e6"/>
<rect x="1180.14" y="660.01" width="51.28" height="22.39" fill="#e6e6e6"/>
<rect x="1231.42" y="660.01" width="51.28" height="22.39" fill="#e6e6e6"/>
<path d="M769.88 503.3V682.4M821.16 503.3V682.4M872.45 503.3V682.4M923.73 503.3V682.4M975.01 503.3V682.4M1026.29 503.3V682.4M1077.57 503.3V682.4M1128.85 503.3V682.4M1180.14 503.3V682.4M1231.42 503.3V682.4M718.6 525.69H1282.7M718.6 548.08H1282.7M718.6 570.46H1282.7M718.6 592.85H1282.7M718.6 615.24H1282.7M718.6 637.62H1282.7M718.6 660.01H1282.7" stroke="#b4b4b4" stroke-opacity=".72" stroke-width="1.150" fill="none"/>
<rect x="718.6" y="503.3" width="564.10" height="179.10" fill="none" stroke="#222" stroke-width="1.500"/>
<path d="M744.24 492.2V503.3M795.52 492.2V503.3M846.80 492.2V503.3M898.09 492.2V503.3M949.37 492.2V503.3M1000.65 492.2V503.3M1051.93 492.2V503.3M1103.21 492.2V503.3M1154.50 492.2V503.3M1205.78 492.2V503.3M1257.06 492.2V503.3M708.800 514.49H718.6M708.800 536.88H718.6M708.800 559.27H718.6M708.800 581.66H718.6M708.800 604.04H718.6M708.800 626.43H718.6M708.800 648.82H718.6M708.800 671.21H718.6" stroke="#222" stroke-width="1.400" fill="none"/>
<text transform="translate(752.04 482.600) scale(1.08 1) rotate(-90)">(Intercept)</text>
<text transform="translate(803.32 482.600) scale(1.08 1) rotate(-90)" letter-spacing=".4">Y-lag1</text>
<text transform="translate(854.60 482.600) scale(1.08 1) rotate(-90)" letter-spacing=".4">Y-lag2</text>
<text transform="translate(905.89 482.600) scale(1.08 1) rotate(-90)" letter-spacing=".4">Y-lag3</text>
<text transform="translate(957.17 482.600) scale(1.08 1) rotate(-90)" letter-spacing=".4">Y-lag4</text>
<text transform="translate(1008.45 482.600) scale(1.08 1) rotate(-90)" letter-spacing=".4">Y-lag5</text>
<text transform="translate(1059.73 482.600) scale(1.08 1) rotate(-90)">error-lag1</text>
<text transform="translate(1111.01 482.600) scale(1.08 1) rotate(-90)">error-lag2</text>
<text transform="translate(1162.30 482.600) scale(1.08 1) rotate(-90)">error-lag3</text>
<text transform="translate(1213.58 482.600) scale(1.08 1) rotate(-90)">error-lag4</text>
<text transform="translate(1264.86 482.600) scale(1.08 1) rotate(-90)">error-lag5</text>
<text transform="translate(698.500 521.99) scale(1.08 1)" text-anchor="end">6.9</text>
<text transform="translate(698.500 544.38) scale(1.08 1)" text-anchor="end">11</text>
<text transform="translate(698.500 566.77) scale(1.08 1)" text-anchor="end">12</text>
<text transform="translate(698.500 589.16) scale(1.08 1)" text-anchor="end">15</text>
<text transform="translate(698.500 611.54) scale(1.08 1)" text-anchor="end">19</text>
<text transform="translate(698.500 633.93) scale(1.08 1)" text-anchor="end">23</text>
<text transform="translate(698.500 656.32) scale(1.08 1)" text-anchor="end">27</text>
<text transform="translate(698.500 678.71) scale(1.08 1)" text-anchor="end">31</text>
<text transform="translate(655 593.200) scale(1.08 1) rotate(-90)" text-anchor="middle">BIC</text>
</svg>
<div class="abs" style="left:1221px;top:699px;width:140px;height:16.500px;background:#fff;border:1px solid #d3d8df"></div>
<svg class="abs" style="left:1208px;top:695px" width="24" height="23" viewBox="0 0 24 23"><g transform="rotate(-14 12 11.500)"><rect x="3.500" y="3" width="17" height="17" rx="2.500" fill="#f0501c"/><text transform="translate(12 16.300) scale(1.450 1)" font-family="Liberation Sans,sans-serif" font-weight="bold" font-size="13.500" fill="#fff" text-anchor="middle">S</text></g></svg>
<span class="abs" style="left:1233px;top:700.500px;font-family:'Liberation Sans','Noto Sans CJK SC',sans-serif;font-weight:bold;font-size:10.500px;line-height:14px;color:#1e6fc8">英</span>
<svg class="abs" style="left:1249px;top:701px" width="104" height="14" viewBox="1249 701 104 14" fill="#1e6fc8"><circle cx="1251.900" cy="705.300" r="1.300"/><path d="M1255 706.500h2.200c.2 2.200-.6 3.600-2 4.600l-.6-.7c.8-.7 1.200-1.300 1.200-2.200h-.8z"/><circle cx="1269.400" cy="707.400" r="5" fill="none" stroke="#1e6fc8" stroke-width="1.100"/><circle cx="1267.600" cy="706" r=".8"/><circle cx="1271.200" cy="706" r=".8"/><path d="M1266.800 708.800c1.600 1.800 3.600 1.800 5.200 0" fill="none" stroke="#1e6fc8" stroke-width=".9"/><rect x="1283" y="702" width="4" height="7" rx="2"/><path d="M1281.500 706.500c0 5 7 5 7 0M1285 710.500v2M1283 712.500h4" fill="none" stroke="#1e6fc8" stroke-width="1"/><rect x="1295" y="703.300" width="11" height="8.300" rx="1.200"/><path d="M1296.500 705.300h8M1296.500 707.300h8M1298 709.600h5" stroke="#fff" stroke-width=".9" stroke-dasharray="1.200 .7"/><g fill="#b9c3d2"><circle cx="1316.500" cy="704.500" r="2"/><path d="M1312 712c0-6 9-6 9 0z"/><rect x="1315.500" y="708.500" width="7.500" height="3.800" rx="1.800" fill="#d5dbe5" stroke="#b9c3d2" stroke-width=".5"/></g><path d="M1329.500 703.300c1 1.200 3 1.200 4 0l3 1.700-1.300 2.300-1.200-.5v5.400h-5v-5.400l-1.200.5-1.300-2.300z"/><rect x="1342" y="703.300" width="4" height="4"/><rect x="1342" y="708.300" width="4" height="4"/><rect x="1347.500" y="708.300" width="4" height="4"/><circle cx="1349.500" cy="705.300" r="2" fill="none" stroke="#1e6fc8" stroke-width="1.100"/></svg>
</body>
</html>
